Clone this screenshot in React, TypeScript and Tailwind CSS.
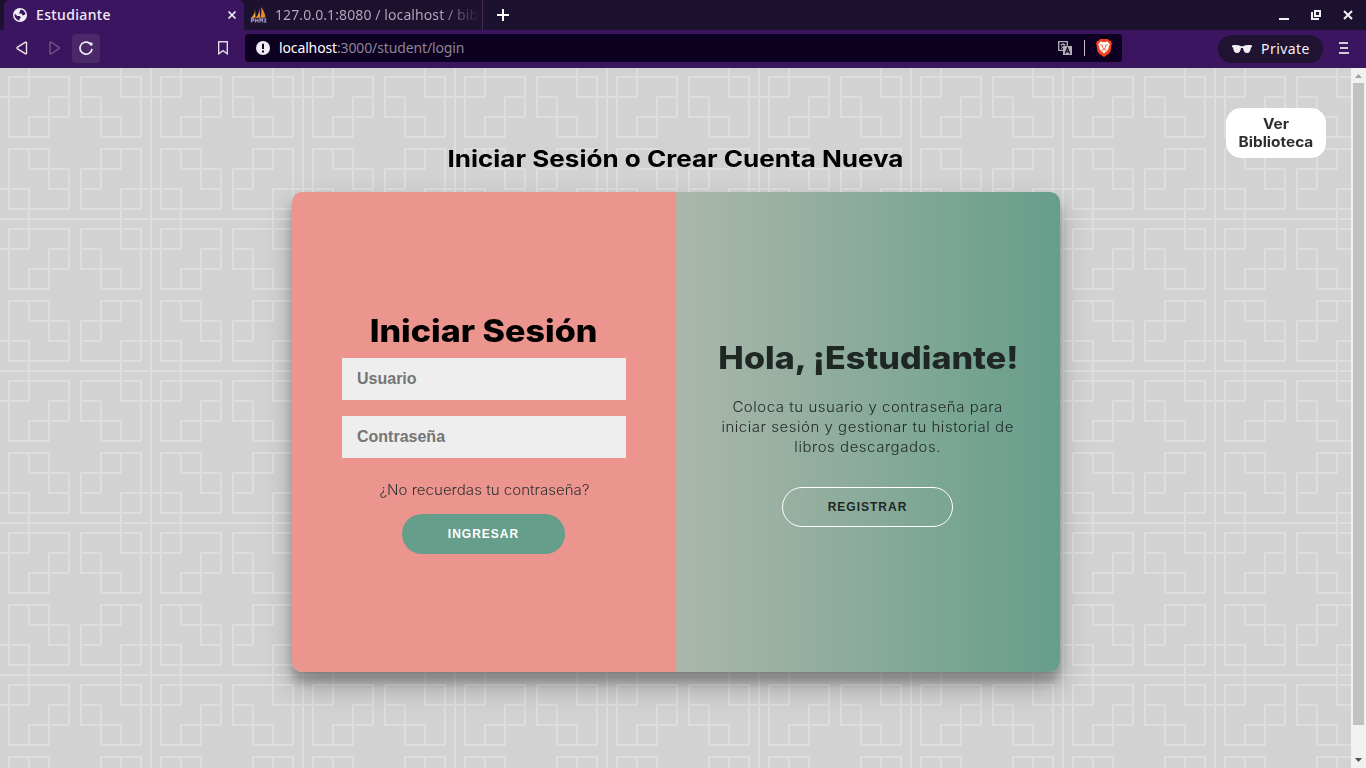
import React from "react";

const QUADRANT = "M29 0V29H0M9 9H69V49H29V69H9ZM29 69H49V29H69";

function TilePattern() {
  return (
    <svg className="absolute inset-0 h-full w-full" aria-hidden="true">
      <defs>
        <pattern id="tiles" width="152" height="152" patternUnits="userSpaceOnUse">
          <rect width="152" height="152" fill="#d2d2d2" />
          <g fill="none" stroke="#dadfde" strokeWidth="2">
            <path d={QUADRANT} />
            <path d={QUADRANT} transform="translate(150 0) scale(-1 1)" />
            <path d={QUADRANT} transform="translate(0 150) scale(1 -1)" />
            <path d={QUADRANT} transform="translate(150 150) scale(-1 -1)" />
            <path d="M151 0V152M0 151H152M29 150V152M121 150V152M150 29H152M150 121H152" />
          </g>
        </pattern>
      </defs>
      <rect width="100%" height="100%" fill="url(#tiles)" />
    </svg>
  );
}

function GlobeIcon() {
  return (
    <svg width="14" height="14" viewBox="0 0 14 14">
      <circle cx="7" cy="7" r="7" fill="#f3eff7" />
      <path
        d="M8.2 1.6 6.8 2.7v1.5L5.4 5.6h3l1 1.6h1.5l1.5-1.2c-.2-2-1.700-3.700-4.200-4.400ZM1.500 6.300c-.2 3 1.800 5.700 5 6.200V11L8 9.400 6.700 8H4.300L2.600 6.300Z"
        fill="#3b155f"
      />
    </svg>
  );
}

function SailsIcon() {
  return (
    <svg width="17" height="16" viewBox="0 0 17 16">
      <path d="M5 1.500C5.200 5 4 8 1 11L5.500 10.500Z" fill="#f3a03a" />
      <path d="M9 .5C9.600 4.500 8.500 8 5.500 11L10.500 10.500Z" fill="#f7941d" />
      <path d="M11 0c2.500 3 4 6.500 4.500 10.500l-4.800.2C11.500 6.500 11.600 3 11 0Z" fill="#e8872a" />
      <path
        d="M1.500 15.500v-4h2V13.500h-2M5.500 15.500v-4M5.500 13.500H8M8 11.500V15.500M10 15.500v-4l1.300 1.500 1.300-1.500V15.500M14.500 11.500l1.500 4M16 11.500l-1.500 4"
        stroke="#8f8ab4"
        strokeWidth="1.300"
        fill="none"
      />
    </svg>
  );
}

function TabStrip() {
  return (
    <div className="flex h-[30px] bg-[#1c112e] pl-1">
      <div className="flex w-[240px] items-center rounded-t-md bg-[#3b155f] pl-[9px] pr-[7px] text-[14px] text-[#f1edf5]">
        <GlobeIcon />
        <span className="-mt-px ml-[9px] flex-1 font-medium tracking-[0.35px]">Estudiante</span>
        <svg width="10" height="10" viewBox="0 0 10 10" stroke="#f1edf5" strokeWidth="1.700">
          <path d="M1.500 1.500 8.500 8.500M8.500 1.500 1.500 8.500" />
        </svg>
      </div>
      <div className="flex w-[239px] items-center border-r border-[#452a58] pl-[6px] text-[14px]">
        <SailsIcon />
        <div className="-mt-px ml-2 w-[206px] whitespace-nowrap bg-gradient-to-r from-[#b4abbf] from-80% to-[#1c112e] bg-clip-text tracking-[0.1px] text-transparent">
          127.0.0.1:8080 / localhost / bib
        </div>
      </div>
      <div className="flex items-center pl-[14px]">
        <svg width="12" height="12" viewBox="0 0 12 12" stroke="#fff" strokeWidth="2">
          <path d="M6 0V12M0 6H12" />
        </svg>
      </div>
      <div className="ml-auto flex items-center gap-[22px] pr-[13px]">
        <svg width="10" height="10" viewBox="0 0 10 10" stroke="#f1f1f4" strokeWidth="2">
          <path d="M0 9H10" />
        </svg>
        <svg width="10" height="10" viewBox="0 0 10 10" fill="none" stroke="#f1f1f4" strokeWidth="2">
          <path d="M4 1H9V6H4ZM1 2V9H8" />
        </svg>
        <svg width="10" height="10" viewBox="0 0 10 10" stroke="#f1f1f4" strokeWidth="2">
          <path d="M1 1 9 9M9 1 1 9" />
        </svg>
      </div>
    </div>
  );
}

function AddressBar() {
  return (
    <div className="flex h-7 w-[877px] items-center rounded bg-[#0d0020] pl-[11px] pr-[10px]">
      <svg width="14" height="14" viewBox="0 0 14 14">
        <circle cx="7" cy="7" r="7" fill="#efedf1" />
        <path d="M7 2.800V8M7 9.500V11.500" stroke="#0d0020" strokeWidth="2" />
      </svg>
      <span className="-mt-px ml-[9px] text-[14px] tracking-[-0.13px] text-[#8b8694]">
        <span className="text-white">localhost</span>:3000/student/login
      </span>
      <svg className="ml-auto" width="14" height="14" viewBox="0 0 14 14">
        <path d="M.7.700H9.300V9.300H.7Z" fill="#0d0020" stroke="#b3afb9" strokeWidth="1.300" />
        <path d="M2.500 3.500H7.500M5 2V3.500M3 7.500C5 6.500 6.300 5.500 6.500 3.500M3.500 4.500C4 6 5 7 6.500 7.500" stroke="#b3afb9" strokeWidth="1" fill="none" />
        <path d="M5 5H14V14H5Z" fill="#b3afb9" />
        <path d="M7.300 12.500 9.500 6.800 11.700 12.500M8 10.700H11" stroke="#0d0020" strokeWidth="1.200" fill="none" />
      </svg>
      <div className="ml-3 h-4 w-px bg-[#c5c1ca]" />
      <svg className="ml-[11px]" width="16" height="18" viewBox="0 0 16 18">
        <path d="M4 0H12L13.500 1.800 15 2 16 4.500 15.500 6 14.500 12.500 12.500 15 8 18 3.500 15 1.500 12.500.5 6 0 4.500 1 2 2.500 1.800Z" fill="#f4401c" />
        <path d="M4.500 2.500 8 3.200 11.500 2.500 13.800 5.200 12.500 8.800 12 11 8 14.500 4 11 3.500 8.800 2.200 5.200Z" fill="#fff" />
        <path d="M4 5.800 6.600 6.400 6.500 8.500 8 9.800 9.500 8.500 9.400 6.400 12 5.800M5.500 11.300 8 10.500 10.500 11.300" stroke="#f4401c" strokeWidth="0.800" fill="none" />
      </svg>
    </div>
  );
}

function Toolbar() {
  return (
    <div className="flex h-[38px] items-center bg-[#3b155f] pb-[2px] pl-4 pr-[17px]">
      <svg width="12" height="14" viewBox="0 0 12 14" fill="none" strokeWidth="1.400" stroke="#e9e3ee">
        <path d="M10.500 1.600V12.400Q10 13.300 9.200 12.700L1.200 7.600Q.6 7 1.200 6.400L9.200 1.300Q10 .7 10.500 1.600Z" />
      </svg>
      <svg className="ml-[21px]" width="12" height="14" viewBox="0 0 12 14" fill="none" strokeWidth="1.400" stroke="#735487">
        <path d="M1 1.600V12.400Q1.500 13.300 2.300 12.700L10 7.600Q10.600 7 10 6.400L2.300 1.300Q1.500 .7 1 1.600Z" />
      </svg>
      <div className="ml-[11px] flex h-[29px] w-7 items-center justify-center rounded bg-[#4b2868]">
        <svg width="14" height="14" viewBox="0 0 14 14" fill="none" stroke="#f1edf5" strokeWidth="1.700">
          <path d="M10.500 2.200A6 6 0 1 0 13 7.800" />
          <path d="M9.500 1.500H12.500A1 1 0 0 1 13.500 2.500V4.500H11Z" fill="#f1edf5" stroke="none" />
        </svg>
      </div>
      <svg className="ml-[118px]" width="10" height="14" viewBox="0 0 10 14" fill="none" stroke="#e0d8e7" strokeWidth="1.400">
        <path d="M.7.700H9.300V12.800L5 9.600.7 12.800Z" />
      </svg>
      <div className="ml-[17px]">
        <AddressBar />
      </div>
      <div className="ml-auto mt-[2px] flex h-7 w-[105px] items-center rounded-full bg-[#201231] pl-[14px] text-[14px] text-[#f3f0f6]">
        <svg width="20" height="9" viewBox="0 0 20 9" fill="#f0eef2">
          <path d="M0 .5C3.500-.2 6.500 0 9 1.200H11C13.500 0 16.500-.2 20 .5V2L19 2.500C18.500 6 17.500 8 15 8 12.500 8 11.500 6 11 3H9C8.500 6 7.500 8 5 8 2.500 8 1.500 6 1 2.500L0 2Z" />
        </svg>
        <span className="-mt-px ml-[9px] tracking-[0.45px]">Private</span>
      </div>
      <svg className="ml-4" width="10" height="12" viewBox="0 0 10 12" stroke="#d3cbdc" strokeWidth="2">
        <path d="M0 1H9M1 6H9M0 11H10" />
      </svg>
    </div>
  );
}

function Scrollbar() {
  return (
    <div className="flex w-[15px] flex-col items-center bg-[#f1f1f1]">
      <svg width="15" height="15" viewBox="0 0 15 15">
        <path d="M4 10H11L7.500 6Z" fill="#a3a3a3" />
      </svg>
      <div className="h-[642px] w-[11px] bg-[#c1c1c1]" />
      <svg className="mt-auto" width="15" height="16" viewBox="0 0 15 16">
        <path d="M4 6H11L7.500 10Z" fill="#505050" />
      </svg>
    </div>
  );
}

function LoginPanel() {
  return (
    <form className="flex w-1/2 flex-col items-center bg-[#ec958e] px-[50px] pt-[119px]">
      <h1 className="scale-x-[1.1] whitespace-nowrap text-[31px] font-extrabold leading-[39px] text-black">
        Iniciar Sesión
      </h1>
      <input
        placeholder="Usuario"
        className="mt-2 h-[42px] w-full rounded-none bg-[#eee] px-[15px] font-['Liberation_Sans',sans-serif] text-[16px] font-bold placeholder:text-[#757575]"
      />
      <input
        placeholder="Contraseña"
        className="mt-4 h-[42px] w-full rounded-none bg-[#eee] px-[15px] font-['Liberation_Sans',sans-serif] text-[16px] font-bold placeholder:text-[#757575]"
      />
      <a className="mt-[22px] scale-x-[1.077] whitespace-nowrap text-[14px] font-light leading-5 text-[#333]">
        ¿No recuerdas tu contraseña?
      </a>
      <button
        type="button"
        className="mr-px mt-[14px] h-10 w-[163px] rounded-full bg-[#659e8a] font-['Liberation_Sans',sans-serif] text-[12px] font-bold tracking-[1px] text-white"
      >
        INGRESAR
      </button>
    </form>
  );
}

function WelcomePanel() {
  return (
    <div className="flex w-1/2 flex-col items-center bg-gradient-to-r from-[#abb7ac] to-[#659e8a] px-10 pt-[146px] text-center text-[#1f2724]">
      <h1 className="scale-x-[1.1] whitespace-nowrap text-[31px] font-extrabold leading-[39px]">Hola, ¡Estudiante!</h1>
      <p className="mt-[20px] scale-x-[1.07] whitespace-nowrap text-[14px] font-light leading-5 tracking-[0.5px]">
        Coloca tu usuario y contraseña para
        <br />
        iniciar sesión y gestionar tu historial de
        <br />
        libros descargados.
      </p>
      <button
        type="button"
        className="mr-px mt-[30px] h-10 w-[171px] rounded-full border border-white font-['Liberation_Sans',sans-serif] text-[12px] font-bold tracking-[1px]"
      >
        REGISTRAR
      </button>
    </div>
  );
}

export default function App() {
  return (
    <div className="flex h-[768px] w-[1366px] flex-col overflow-hidden">
      <header className="font-['Noto_Sans',sans-serif]">
        <TabStrip />
        <Toolbar />
      </header>
      <div className="flex min-h-0 flex-1">
        <main className="relative w-[1351px] overflow-hidden bg-[#d2d2d2] font-['Inter',sans-serif]">
          <TilePattern />
          <button
            type="button"
            className="absolute right-[25px] top-10 h-[50px] w-[100px] rounded-[15px] bg-white text-[14px] font-bold leading-[18px] text-[#2e2e2e]"
          >
            <span className="inline-block scale-x-[1.1]">
              Ver
              <br />
              Biblioteca
            </span>
          </button>
          <div className="relative flex flex-col items-center pt-[77px]">
            <h2 className="scale-x-[1.132] whitespace-nowrap text-[23px] font-bold leading-[29px] text-black">
              Iniciar Sesión o Crear Cuenta Nueva
            </h2>
            <section className="ml-px mt-[18px] flex h-[480px] w-[768px] overflow-hidden rounded-[10px] shadow-[0_14px_28px_rgba(0,0,0,0.25),0_10px_10px_rgba(0,0,0,0.22)]">
              <LoginPanel />
              <WelcomePanel />
            </section>
          </div>
        </main>
        <Scrollbar />
      </div>
    </div>
  );
}
